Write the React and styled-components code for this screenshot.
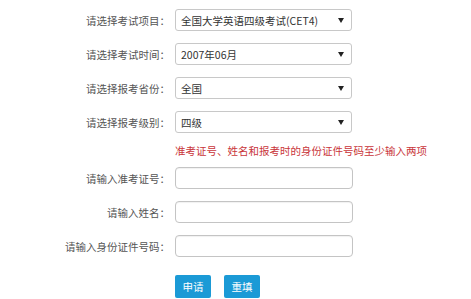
import React from 'react';
import styled, { createGlobalStyle } from 'styled-components';

const Global = createGlobalStyle`
  html, body {
    margin: 0;
    padding: 0;
    background: #fff;
  }
  body {
    font-family: "Noto Sans CJK SC", "Liberation Sans", sans-serif;
  }
`;

const Form = styled.div`
  width: 471px;
  height: 299px;
  overflow: hidden;
  padding-top: 9px;
  box-sizing: border-box;
  display: flex;
  flex-direction: column;
`;

const Row = styled.div`
  display: flex;
  align-items: center;
  height: 22px;
  flex-shrink: 0;
  margin-bottom: ${props => props.gap ?? 12}px;
`;

const Label = styled.div`
  width: 175px;
  padding-right: 5px;
  box-sizing: border-box;
  text-align: right;
  font-size: 10.5px;
  color: #555;
  white-space: nowrap;
`;

const SelectBox = styled.div`
  width: 177px;
  height: 22px;
  box-sizing: border-box;
  border: 1px solid #c8c8c8;
  border-radius: 3px;
  display: flex;
  align-items: center;
  justify-content: space-between;
  padding: 0 7px 0 5px;
  font-size: 10.5px;
  color: #333;
  background: #fff;
`;

const Arrow = styled.span`
  width: 0;
  height: 0;
  border-left: 3px solid transparent;
  border-right: 3px solid transparent;
  border-top: 5px solid #222;
`;

const Notice = styled.div`
  margin: 7px 0 5px 175px;
  height: 22px;
  flex-shrink: 0;
  line-height: 22px;
  font-size: 10.5px;
  color: #c9353a;
  white-space: nowrap;
`;

const TextInput = styled.div`
  width: 178px;
  height: 22px;
  box-sizing: border-box;
  border: 1px solid #c4c4c4;
  border-radius: 4px;
  background: #fff;
  box-shadow: inset 0 1px 1px rgba(0, 0, 0, 0.06);
`;

const Buttons = styled.div`
  display: flex;
  gap: 13px;
  margin-left: 175px;
  margin-top: 6px;
  flex-shrink: 0;
`;

const Button = styled.div`
  width: 36px;
  height: 23px;
  border-radius: 2px;
  background: #1b9ad6;
  color: #fff;
  font-size: 10.5px;
  display: flex;
  align-items: center;
  justify-content: center;
`;

const selects = [
  ['请选择考试项目：', '全国大学英语四级考试(CET4)'],
  ['请选择考试时间：', '2007年06月'],
  ['请选择报考省份：', '全国'],
  ['请选择报考级别：', '四级'],
];

const inputs = ['请输入准考证号：', '请输入姓名：', '请输入身份证件号码：'];

export default function App() {
  return (
    <>
      <Global />
      <Form>
        {selects.map(([label, value], i) => (
          <Row key={label} gap={i === 3 ? 0 : 12}>
            <Label>{label}</Label>
            <SelectBox>
              <span>{value}</span>
              <Arrow />
            </SelectBox>
          </Row>
        ))}
        <Notice>准考证号、姓名和报考时的身份证件号码至少输入两项</Notice>
        {inputs.map((label) => (
          <Row key={label}>
            <Label>{label}</Label>
            <TextInput />
          </Row>
        ))}
        <Buttons>
          <Button>申请</Button>
          <Button>重填</Button>
        </Buttons>
      </Form>
    </>
  );
}
